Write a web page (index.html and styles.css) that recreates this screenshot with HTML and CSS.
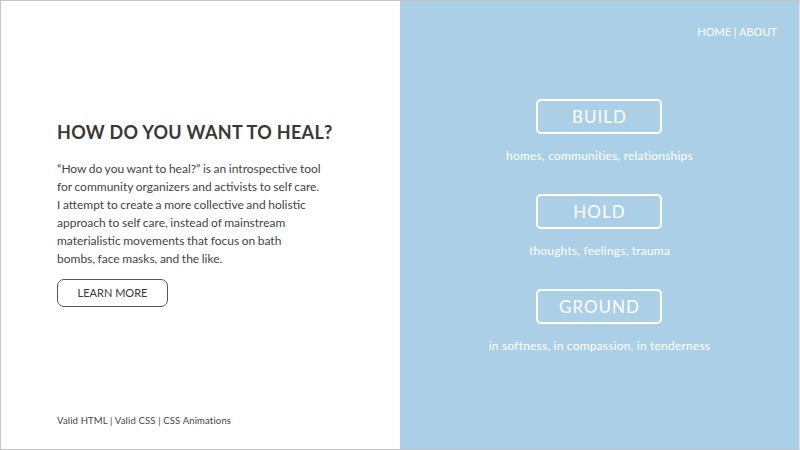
FILE: index.html
```html
<!DOCTYPE html>
<html lang="en">
<head>
<meta charset="utf-8">
<title>How do you want to heal?</title>
<link rel="stylesheet" href="styles.css">
</head>
<body>
<div class="frame">
  <section class="intro">
    <div class="intro-main">
      <h1 class="title">HOW DO YOU WANT TO HEAL?</h1>
      <p class="lead">“How do you want to heal?” is an introspective tool for community organizers and activists to self care. I attempt to create a more collective and holistic approach to self care, instead of mainstream materialistic movements that focus on bath<br>bombs, face masks, and the like.</p>
      <a class="learn" href="#">LEARN MORE</a>
    </div>
    <footer class="credits">Valid HTML | Valid CSS | CSS Animations</footer>
  </section>
  <section class="paths">
    <nav class="nav"><a href="#">HOME</a> | <a href="#">ABOUT</a></nav>
    <div class="path-list">
      <div class="path">
        <a class="path-btn" href="#">BUILD</a>
        <p class="path-cap">homes, communities, relationships</p>
      </div>
      <div class="path">
        <a class="path-btn" href="#">HOLD</a>
        <p class="path-cap">thoughts, feelings, trauma</p>
      </div>
      <div class="path">
        <a class="path-btn" href="#">GROUND</a>
        <p class="path-cap">in softness, in compassion, in tenderness</p>
      </div>
    </div>
  </section>
</div>
</body>
</html>
```
FILE: styles.css
```css
* { box-sizing: border-box; }
html, body { margin: 0; padding: 0; }
body {
  font-family: Lato, "Open Sans", sans-serif;
  color: #3a3a3a;
}
a { text-decoration: none; color: inherit; }
.frame {
  width: 800px;
  height: 450px;
  border: 1px solid #c4c4c4;
  border-right-color: #d6e6f2;
  display: flex;
}
.intro {
  width: 399px;
  background: #fff;
  padding: 119px 0 0 56px;
  display: flex;
  flex-direction: column;
}
.intro-main { flex: 1; }
.title {
  margin: 0;
  font-size: 18px;
  font-weight: 700;
  letter-spacing: 0.3px;
  color: #383838;
  line-height: 24px;
}
.lead {
  margin: 16px 0 0;
  width: 265px;
  font-size: 12px;
  line-height: 18px;
  word-spacing: -0.5px;
  color: #444;
}
.learn {
  display: inline-block;
  margin-top: 11px;
  width: 111px;
  height: 28px;
  line-height: 26px;
  text-align: center;
  border: 1px solid #555;
  border-radius: 7px;
  font-size: 11px;
  color: #3a3a3a;
}
.credits {
  font-size: 9.5px;
  letter-spacing: 0.15px;
  color: #444;
  padding-bottom: 23px;
}
.paths {
  flex: 1;
  background: #abcfe7;
  color: #fff;
  display: flex;
  flex-direction: column;
}
.nav {
  align-self: flex-end;
  padding: 23px 22px 0 0;
  font-size: 11px;
  line-height: 16px;
}
.path-list {
  margin-top: 59px;
  display: flex;
  flex-direction: column;
  align-items: center;
}
.path {
  display: flex;
  flex-direction: column;
  align-items: center;
  height: 95px;
}
.path-btn {
  width: 126px;
  height: 35px;
  border: 2px solid #fff;
  border-radius: 5px;
  text-align: center;
  font-size: 17px;
  line-height: 31px;
  letter-spacing: 1px;
}
.path-cap {
  margin: 14px 0 0;
  font-size: 12px;
  line-height: 16px;
  letter-spacing: 0.2px;
}
```
